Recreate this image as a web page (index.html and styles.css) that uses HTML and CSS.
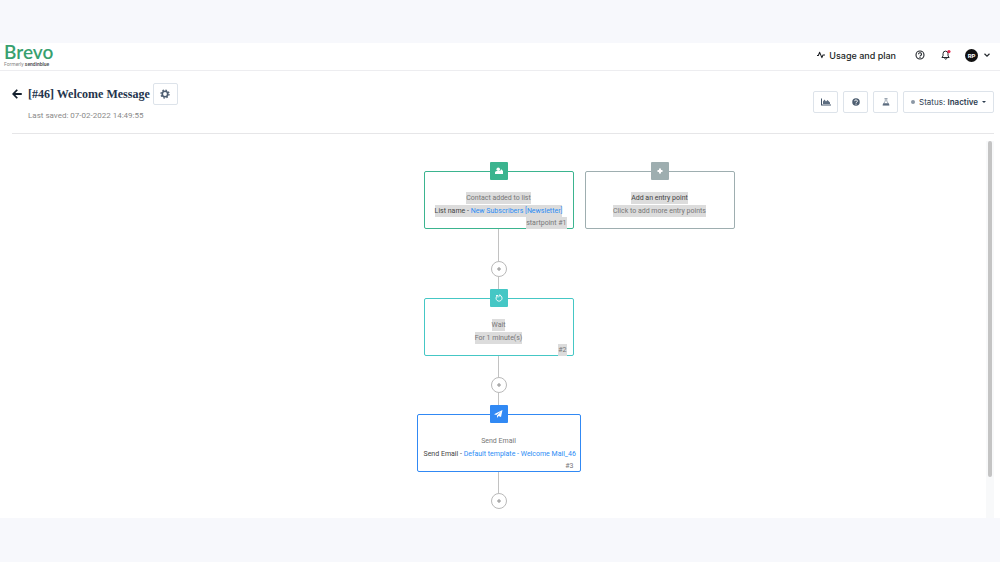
FILE: index.html
```html
<!DOCTYPE html>
<html lang="en">
<head>
    <meta charset="UTF-8">
    <meta name="viewport" content="width=device-width, initial-scale=1.0">
    <title>Welcome Message</title>
    <link rel="stylesheet" href="styles.css">
</head>
<body>
    <div class="app">
        <!-- Top bar -->
        <header class="topbar">
            <a class="brand" href="#">
                <span class="brand-name">Brevo</span>
                <span class="brand-note">Formerly <b>sendinblue</b></span>
            </a>
            <nav class="account">
                <a class="usage" href="#">
                    <svg width="8" height="8" viewBox="0 0 18 18" fill="none" stroke="#1b1f24" stroke-width="2.4" stroke-linejoin="round"><path d="M0 10h3l3-7 5 12 2.500-6H18"/></svg>
                    Usage and plan
                </a>
                <button class="icon-btn" aria-label="Help">
                    <svg width="10" height="10" viewBox="0 0 20 20" fill="none" stroke="#23272c" stroke-width="2.200"><circle cx="10" cy="10" r="8"/><path d="M7 8.500a3 3 0 1 1 4.500 2.500c-1 .5-1.500 1-1.500 2M10 13.800v2"/></svg>
                </button>
                <button class="icon-btn" aria-label="Notifications">
                    <svg width="10" height="10" viewBox="0 0 22 22"><path d="M2 16.500h16l-2.500-3.500V8a5.500 5.500 0 0 0-11 0v5zM8 18c.5 3 4.500 3 5 0" fill="none" stroke="#23272c" stroke-width="2.200" stroke-linejoin="round"/><circle cx="17.500" cy="3.500" r="3.500" fill="#e5264f"/></svg>
                </button>
                <button class="profile" aria-label="Profile">
                    <span class="avatar">RP</span>
                    <svg width="6" height="4" viewBox="0 0 12 8" fill="none" stroke="#23272c" stroke-width="2.400"><path d="M1 1.500l5 5 5-5"/></svg>
                </button>
            </nav>
        </header>

        <!-- Workflow title and actions -->
        <section class="toolbar">
            <div class="heading">
                <a class="back" href="#" aria-label="Back">
                    <svg width="10" height="10" viewBox="0 0 20 20" fill="none" stroke="#14202e" stroke-width="3.600"><path d="M10.500 1.500L2.500 10l8 8.500M3 10h16.500"/></svg>
                </a>
                <div>
                    <div class="title-row">
                        <h1>[#46] Welcome Message</h1>
                        <button class="box-btn gear" aria-label="Settings">
                            <svg width="10" height="10" viewBox="0 0 20 20" fill="none" stroke="#4d5d70"><circle cx="10" cy="10" r="5.500" stroke-width="3.400"/><circle cx="10" cy="10" r="8" stroke-width="2.600" stroke-dasharray="3.140 3.140"/></svg>
                        </button>
                    </div>
                    <p class="saved">Last saved: 07-02-2022 14:49:55</p>
                </div>
            </div>
            <div class="actions">
                <button class="box-btn" aria-label="Statistics">
                    <svg width="10" height="8" viewBox="0 0 20 16"><path d="M0 1h2v12h18v2H0z" fill="#43556a"/><path d="M4 12V7l3-4 3 4 3-3 5 5v3z" fill="#5c6c7f"/></svg>
                </button>
                <button class="box-btn" aria-label="Help">
                    <svg width="8" height="8" viewBox="0 0 16 16"><circle cx="8" cy="8" r="7.500" fill="#4d5d70"/><path d="M5.300 6.300a2.700 2.500 0 1 1 4 2.200c-1 .5-1.300.8-1.300 1.600M8 11.300v2" fill="none" stroke="#fff" stroke-width="2"/></svg>
                </button>
                <button class="box-btn" aria-label="Test">
                    <svg width="8" height="8" viewBox="0 0 16 16"><path d="M5 1h6M6.500 1v5L2 13.500h12L9.500 6V1" fill="none" stroke="#8b97a5" stroke-width="1.600"/><path d="M3 10.500h10l2 4.500H1z" fill="#5c6c7f"/></svg>
                </button>
                <button class="box-btn status" aria-haspopup="true">
                    <span class="dot"></span>
                    <span>Status: <b>Inactive</b></span>
                    <span class="caret"></span>
                </button>
            </div>
        </section>

        <!-- Workflow diagram -->
        <main class="canvas">
            <div class="row">
                <article class="node green">
                    <span class="tile"><svg width="8" height="8" viewBox="0 0 16 16" fill="#fff"><circle cx="6.500" cy="4.500" r="3.500"/><path d="M0 14V11q0-3 3.500-3H9v-1h2.500V5H14v2h2v7z"/></svg></span>
                    <p><mark>Contact added to list</mark></p>
                    <p><mark class="strong">List name - <a href="#">New Subscribers [Newsletter]</a></mark></p>
                    <p class="tag"><mark>startpoint #1</mark></p>
                </article>
                <article class="node gray">
                    <span class="tile"><svg width="6" height="6" viewBox="0 0 12 12" stroke="#fff" stroke-width="4"><path d="M6 1v10M1 6h10"/></svg></span>
                    <p><mark class="strong">Add an entry point</mark></p>
                    <p><mark>Click to add more entry points</mark></p>
                </article>
            </div>
            <div class="line line-long"></div>
            <button class="add" aria-label="Add step"><svg width="4" height="4" viewBox="0 0 4 4" stroke="#8e8e8e"><path d="M2 0v4M0 2h4"/></svg></button>
            <div class="line"></div>
            <article class="node teal">
                <span class="tile"><svg width="8" height="8" viewBox="0 0 16 16" fill="none" stroke="#fff" stroke-width="1.800"><path d="M9.500 2.500a6 6 0 1 1-5 1M2 3h4v4M9.500 1v4"/></svg></span>
                <p><mark>Wait</mark></p>
                <p><mark>For 1 minute(s)</mark></p>
                <p class="tag"><mark>#2</mark></p>
            </article>
            <div class="line"></div>
            <button class="add" aria-label="Add step"><svg width="4" height="4" viewBox="0 0 4 4" stroke="#8e8e8e"><path d="M2 0v4M0 2h4"/></svg></button>
            <div class="line"></div>
            <article class="node blue">
                <span class="tile"><svg width="9" height="8" viewBox="0 0 18 16" fill="#fff"><path d="M17 0l-3 14-5-2-3 4v-5l8-8-9.500 7L0 8.500z"/></svg></span>
                <p>Send Email</p>
                <p><span class="strong">Send Email - <a href="#">Default template - Welcome Mail_46</a></span></p>
                <p class="tag">#3</p>
            </article>
            <div class="line"></div>
            <button class="add" aria-label="Add step"><svg width="4" height="4" viewBox="0 0 4 4" stroke="#8e8e8e"><path d="M2 0v4M0 2h4"/></svg></button>
            <div class="scroll"><div class="thumb"></div></div>
        </main>
    </div>
</body>
</html>
```
FILE: styles.css
```css
* {
    box-sizing: border-box;
}

body {
    margin: 0;
    min-height: 100vh;
    padding: 43px 0 44px;
    display: flex;
    background-color: #f7f8fc;
    font-family: Roboto, "Liberation Sans", sans-serif;
    color: #333;
}

h1, p {
    margin: 0;
}

a {
    color: inherit;
    text-decoration: none;
}

button {
    padding: 0;
    border: none;
    background: none;
    font: inherit;
    color: inherit;
    display: flex;
    align-items: center;
    justify-content: center;
    cursor: pointer;
}

svg {
    display: block;
    overflow: visible;
}

.app {
    flex: 1;
    display: flex;
    flex-direction: column;
    background-color: white;
}

/* top bar */
.topbar {
    display: flex;
    justify-content: space-between;
    align-items: center;
    height: 28px;
    padding: 0 10px 3px 4px;
    border-bottom: 1px solid #ededf0;
}

.brand {
    display: flex;
    flex-direction: column;
}

.brand-name {
    font-family: Lato, sans-serif;
    font-weight: 600;
    font-size: 19px;
    line-height: 18px;
    color: #37a06f;
}

.brand-note {
    font-size: 5px;
    line-height: 6px;
    color: #888;
}

.brand-note b {
    font-weight: 500;
    color: #444;
}

.account {
    display: flex;
    align-items: center;
    gap: 16px;
}

.usage {
    display: flex;
    align-items: center;
    gap: 4px;
    margin-right: 3px;
    font-family: Inter, sans-serif;
    font-size: 9px;
    font-weight: 500;
    color: #1b1f24;
}

.profile {
    gap: 6px;
    margin-left: -2px;
}

.avatar {
    width: 13px;
    height: 13px;
    border-radius: 50%;
    background-color: #111;
    color: white;
    font-size: 6px;
    font-weight: bold;
    line-height: 13px;
    text-align: center;
}

/* title and actions */
.toolbar {
    display: flex;
    justify-content: space-between;
    height: 63px;
    margin: 0 6px 0 12px;
    padding-top: 12px;
    border-bottom: 1px solid #e6e6e8;
}

.heading {
    display: flex;
    gap: 6px;
}

.back {
    padding-top: 6px;
}

.title-row {
    display: flex;
    align-items: center;
    gap: 3px;
}

h1 {
    font-family: "Liberation Serif", serif;
    font-size: 12px;
    font-weight: bold;
    color: #24344c;
}

.saved {
    margin-top: 5px;
    font-size: 8px;
    line-height: 12px;
    color: #8a8a8a;
}

.actions {
    display: flex;
    gap: 5px;
    padding-top: 8px;
    align-items: flex-start;
}

.box-btn {
    width: 25px;
    height: 22px;
    border: 1px solid #dde3ea;
    border-radius: 2px;
    background-color: white;
}

.status {
    width: auto;
    padding: 0 7px;
    gap: 4px;
    font-family: Inter, sans-serif;
    font-size: 8px;
    color: #2c3c4f;
}

.status b {
    font-weight: 600;
}

.dot {
    width: 4px;
    height: 4px;
    border-radius: 50%;
    background-color: #8b97a5;
}

.caret {
    border: 2px solid transparent;
    border-top-color: #2c3c4f;
    border-bottom: none;
}

/* diagram */
.canvas {
    position: relative;
    flex: 1;
    display: flex;
    flex-direction: column;
    align-items: center;
    padding: 37px 3px 9px 0;
}

.row {
    align-self: stretch;
    display: grid;
    grid-template-columns: 1fr auto 1fr;
    column-gap: 11px;
}

.row .green {
    grid-column: 2;
}

.node {
    position: relative;
    width: 150px;
    height: 58px;
    padding: 20px 6px 0;
    border: 1px solid currentColor;
    border-radius: 2px;
    text-align: center;
}

.node p {
    font-size: 7px;
    line-height: 13px;
    color: #777;
    white-space: nowrap;
}

.node p.tag {
    line-height: 11px;
    text-align: right;
}

.node a {
    color: #2b8cf5;
}

mark {
    padding: 2px 0;
    background-color: #dcdcdc;
    color: inherit;
}

.strong {
    color: #444;
}

.green {
    color: #3bb48f;
}

.gray {
    color: #9eaeb0;
}

.teal {
    color: #45c7c5;
}

.blue {
    width: 164px;
    color: #3189f4;
}

.tile {
    position: absolute;
    top: -10px;
    left: 50%;
    width: 18px;
    height: 18px;
    margin-left: -9px;
    display: flex;
    align-items: center;
    justify-content: center;
    border-radius: 1px;
    background-color: currentColor;
}

.line {
    width: 1px;
    height: 21px;
    background-color: #c2c2c2;
}

.line-long {
    height: 32px;
}

.add {
    width: 16px;
    height: 16px;
    flex-shrink: 0;
    border: 1px solid #b9b9b9;
    border-radius: 50%;
    background-color: white;
}

.scroll {
    position: absolute;
    top: 7px;
    right: 6px;
    bottom: 0;
    width: 8px;
    padding: 0 2px;
    background-color: #f8f9fa;
}

.thumb {
    height: 89%;
    border-radius: 2px;
    background-color: #c4c4c4;
}
```
